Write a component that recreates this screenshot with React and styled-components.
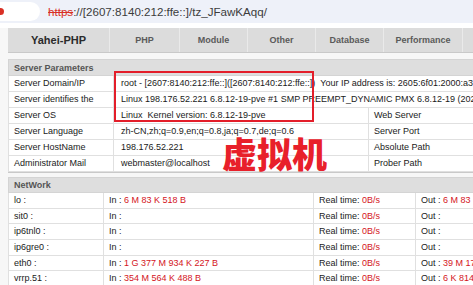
import styled, { createGlobalStyle } from "styled-components";

const GlobalStyle = createGlobalStyle`
  html, body {
    margin: 0;
    padding: 0;
    background: #f7f7f7;
    overflow: hidden;
  }
  body {
    font-family: "Liberation Sans", Arial, sans-serif;
  }
`;

const Page = styled.div`
  position: relative;
  width: 473px;
  height: 285px;
  overflow: hidden;
`;

const AddressBar = styled.div`
  height: 23px;
  background: #eef1f9;
  display: flex;
  align-items: center;
  border-bottom: 5px solid #ffffff;
`;

const Chip = styled.div`
  width: 40px;
  height: 19px;
  background: #ffffff;
  border-radius: 0 10px 10px 0;
  display: flex;
  align-items: center;
`;

const ChipDot = styled.span`
  width: 7px;
  height: 7px;
  margin-left: -3px;
  border-radius: 50%;
  background: #d93025;
`;

const Url = styled.div`
  margin-left: 8px;
  font-size: 11.6px;
  color: #3c3c3c;
  white-space: nowrap;
`;

const Insecure = styled.span`
  color: #d93025;
  text-decoration: line-through;
`;

const Content = styled.div`
  padding-left: 8px;
  width: 640px;
`;

const Nav = styled.div`
  display: flex;
  height: 24px;
  background: #dcdcdc;
  box-shadow: 0 1px 0 #c9c9c9;
`;

const NavItem = styled.div`
  flex: 0 0 ${(p) => p.$w}px;
  display: flex;
  align-items: center;
  justify-content: center;
  border-right: 1px solid #eaeaea;
  box-sizing: border-box;
  font-weight: bold;
  font-size: ${(p) => (p.$brand ? 11 : 9)}px;
  color: ${(p) => (p.$brand ? "#2b2b2b" : "#5a5a5a")};
`;

const Table = styled.table`
  width: 640px;
  border-collapse: collapse;
  table-layout: fixed;
  margin-top: ${(p) => p.$gap}px;
  background: #ffffff;
  box-shadow: 0 1px 0 #c9c9c9;
  font-size: 9px;
  color: #1a1a1a;
`;

const Head = styled.th`
  height: ${(p) => p.$h || 15}px;
  padding: 0 5px;
  background: #dedede;
  border: 1px solid #d4d4d4;
  text-align: left;
  font-weight: bold;
  color: #555555;
`;

const Row = styled.tr`
  height: ${(p) => p.$h || 16}px;
`;

const Td = styled.td`
  padding: 0 5px 0 ${(p) => p.$indent || 5}px;
  border: 1px solid #e0e0e0;
  white-space: nowrap;
  overflow: hidden;
  line-height: 13px;
`;

const Red = styled.span`
  color: #d4141c;
`;

const Mark = styled.div`
  position: absolute;
  left: 114px;
  top: 71px;
  width: 200px;
  height: 51px;
  box-sizing: border-box;
  border: 2px solid #e31e2a;
`;

const Stamp = styled.div`
  position: absolute;
  left: 222px;
  top: 135px;
  font-family: "Noto Sans CJK SC", sans-serif;
  font-weight: 900;
  font-size: 35px;
  line-height: 1;
  color: #e8202a;
`;

const navItems = [
  { label: "PHP", w: 70 },
  { label: "Module", w: 68 },
  { label: "Other", w: 68 },
  { label: "Database", w: 68 },
  { label: "Performance", w: 79 },
  { label: "", w: 80 },
];

const params = [
  ["Server Language", "zh-CN,zh;q=0.9,en;q=0.8,ja;q=0.7,de;q=0.6", "Server Port"],
  ["Server HostName", "198.176.52.221", "Absolute Path"],
  ["Administrator Mail", "webmaster@localhost", "Prober Path"],
];

const net = [
  ["lo :", "6 M 83 K 518 B", "6 M 83 K 518 B"],
  ["sit0 :", "", ""],
  ["ip6tnl0 :", "", ""],
  ["ip6gre0 :", "", ""],
  ["eth0 :", "1 G 377 M 934 K 227 B", "39 M 177 K 602 B"],
  ["vrrp.51 :", "354 M 564 K 488 B", "6 K 814 B"],
];

export default function App() {
  return (
    <Page>
      <GlobalStyle />
      <AddressBar>
        <Chip>
          <ChipDot />
        </Chip>
        <Url>
          <Insecure>https</Insecure>://[2607:8140:212:ffe::]/tz_JFawKAqq/
        </Url>
      </AddressBar>

      <Content>
        <Nav>
          <NavItem $w={102} $brand>
            Yahei-PHP
          </NavItem>
          {navItems.map((n, i) => (
            <NavItem key={i} $w={n.w}>
              {n.label}
            </NavItem>
          ))}
        </Nav>

        <Table $gap={7}>
          <colgroup>
            <col style={{ width: 105 }} />
            <col style={{ width: 255 }} />
            <col style={{ width: 130 }} />
            <col />
          </colgroup>
          <thead>
            <tr>
              <Head colSpan={4}>Server Parameters</Head>
            </tr>
          </thead>
          <tbody>
            <Row>
              <Td>Server Domain/IP</Td>
              <Td colSpan={3} $indent={7}>
                root - [2607:8140:212:ffe::]([2607:8140:212:ffe::])&nbsp;&nbsp;Your IP address is: 2605:6f01:2000:a3::1
              </Td>
            </Row>
            <Row>
              <Td>Server identifies the</Td>
              <Td colSpan={3} $indent={7}>
                Linux 198.176.52.221 6.8.12-19-pve #1 SMP PREEMPT_DYNAMIC PMX 6.8.12-19 (2025-08-26T22:25Z) x86_64
              </Td>
            </Row>
            <Row>
              <Td>Server OS</Td>
              <Td $indent={7}>Linux&nbsp; Kernel version: 6.8.12-19-pve</Td>
              <Td>Web Server</Td>
              <Td>Apache</Td>
            </Row>
            {params.map((r) => (
              <Row key={r[0]}>
                <Td>{r[0]}</Td>
                <Td $indent={7}>{r[1]}</Td>
                <Td>{r[2]}</Td>
                <Td></Td>
              </Row>
            ))}
          </tbody>
        </Table>

        <Table $gap={5}>
          <colgroup>
            <col style={{ width: 95 }} />
            <col style={{ width: 210 }} />
            <col style={{ width: 102 }} />
            <col />
          </colgroup>
          <thead>
            <tr>
              <Head colSpan={4} $h={14}>
                NetWork
              </Head>
            </tr>
          </thead>
          <tbody>
            {net.map((r) => (
              <Row key={r[0]} $h={15.7}>
                <Td>{r[0]}</Td>
                <Td>
                  In : <Red>{r[1]}</Red>
                </Td>
                <Td>
                  Real time: <Red>0B/s</Red>
                </Td>
                <Td>
                  Out : <Red>{r[2]}</Red>
                </Td>
              </Row>
            ))}
          </tbody>
        </Table>
      </Content>

      <Mark />
      <Stamp>虚拟机</Stamp>
    </Page>
  );
}
